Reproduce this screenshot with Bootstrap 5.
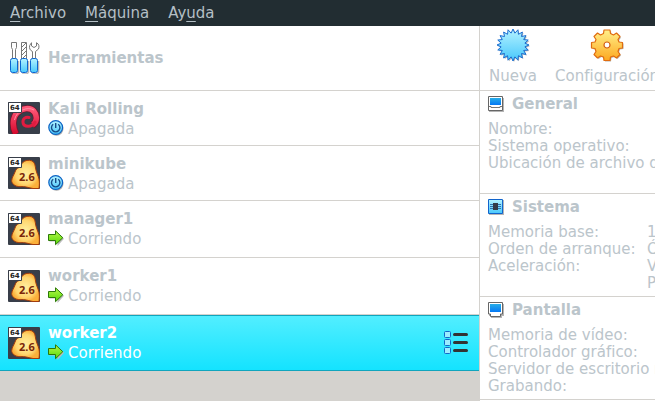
<!DOCTYPE html>
<html lang="es">
<head>
<meta charset="utf-8">
<meta name="viewport" content="width=device-width, initial-scale=1">
<title>Administrador de máquinas</title>
<link href="https://cdn.jsdelivr.net/npm/bootstrap@5.3.0/dist/css/bootstrap.min.css" rel="stylesheet">
<style>
  body { font-family: "DejaVu Sans", sans-serif; font-size: 15px; line-height: 20px; color: #bbc5cb; background: #fff; }
  button { color: inherit; }
  svg { display: block; flex: none; }
  .menubar { background: #222d32; padding: 3px 10px; gap: 19px; }
  .menubar a { color: #b4bfc5; text-decoration: none; }
  .menubar u { text-underline-offset: 3px; text-decoration-thickness: 1px; text-decoration-skip-ink: none; }
  .panes { display: grid; grid-template-columns: 480px minmax(0, 1fr); }
  .machines { background: #d4d2ce; border-right: 1px solid #d4d2ce; }
  .machine { background: #fff; border-bottom: 1px solid #d4d2ce; }
  .machine > button:first-child { padding: 7px 8px; gap: 8px; }
  .machine.roomy > button:first-child { padding-block: 8px; }
  .machine.stopped > button:first-child { padding-block: 6px; }
  .machine.stopped .title { padding-top: 2px; }
  .machine.tools > button:first-child { padding-block: 16px; }
  .machine.selected { color: #fff; background: linear-gradient(#52eeff, #14e3ff); border: solid #10a5bd; border-width: 1px 0; }
  .state { gap: 4px; }
  .state span { font-weight: 400; }
  .state svg { margin-bottom: 3px; }
  .menu-button { padding: 0 10px; }
  .toolbar { padding-top: 2px; border-bottom: 1px solid #d4d2ce; overflow: hidden; }
  .toolbar button { padding: 0 9px 4px; }
  .toolbar svg { margin-bottom: 4px; }
  .group { min-height: 103px; padding: 3px 0 4px 8px; border-bottom: 1px solid #d4d2ce; overflow: hidden; }
  .group h2 { font-size: 15px; line-height: 20px; gap: 7px; margin-bottom: 7px; }
  .group th, .group td { padding: 0; font-weight: 400; line-height: 17px; white-space: nowrap; vertical-align: top; }
  .group th { min-width: 159px; }
  .t64 { font: bold 7px "DejaVu Sans", sans-serif; fill: #222; }
  .t26 { font: bold 11px "Noto Sans", sans-serif; fill: #7b2708; }
</style>
<script src="https://cdn.jsdelivr.net/npm/bootstrap@5.3.0/dist/js/bootstrap.bundle.min.js"></script>
</head>
<body class="min-vh-100 d-flex flex-column overflow-hidden">
<svg width="0" height="0" class="position-absolute" aria-hidden="true">
  <defs>
    <linearGradient id="blue" x2="0" y2="1"><stop stop-color="#b4f2ff"/><stop offset="1" stop-color="#48c8fc"/></linearGradient>
    <linearGradient id="screen" x2="0" y2="1"><stop stop-color="#28aee8"/><stop offset="1" stop-color="#0478f5"/></linearGradient>
    <linearGradient id="gold" x2="0" y2="1"><stop stop-color="#fff08a"/><stop offset="1" stop-color="#fda820"/></linearGradient>
    <linearGradient id="green" x2="0" y2="1"><stop stop-color="#b6f84a"/><stop offset="1" stop-color="#55d808"/></linearGradient>
    <linearGradient id="red" x2="0" y2="1"><stop stop-color="#ff5878"/><stop offset="1" stop-color="#d4082c"/></linearGradient>
    <radialGradient id="amber"><stop stop-color="#fff0a0"/><stop offset=".7" stop-color="#ffd670"/><stop offset="1" stop-color="#fbb03a"/></radialGradient>
    <symbol id="linux" viewBox="0 0 32 32">
      <rect width="32" height="32" rx="1" fill="#383e49"/>
      <path d="M13.500 7C15 4.500 18 3 21.500 3.300C25 3.500 27 6 27.300 9.500C27.600 14 30 18 31 22C31.500 25 31.500 28 31 31.500H25C21 31 17 29 12 29.700C7 29.700 3.500 26.500 3.700 23.500C4 20 6 18 7 15C8 12 9 11.500 11 10.500Z" fill="url(#amber)" stroke="#a33c0c"/>
      <text x="11" y="24" class="t26">2.6</text>
      <path d="M.5.5h13v10H.5z" fill="#fff" stroke="#383e49"/><text x="2" y="8" class="t64">64</text>
    </symbol>
    <symbol id="power" viewBox="0 0 16 16">
      <circle cx="8.500" cy="8.700" r="7" fill="#aaa"/>
      <circle cx="7.700" cy="7.500" r="6.900" fill="url(#blue)" stroke="#0b62c4" stroke-width="1.200"/>
      <path d="M7.700 3v5M5.200 4.300a4.200 4.200 0 1 0 5 0" fill="none" stroke="#174b88" stroke-width="1.400"/>
    </symbol>
    <symbol id="run" viewBox="0 0 16 16">
      <path d="M1.500 5.500h7V1.500L16 8.700 9.500 16v-4.500h-8z" fill="#bbb"/>
      <path d="M.5 4.500h7V.8L14.800 7.700 7.500 14.700V10.500h-7z" fill="url(#green)" stroke="#2c7808"/>
    </symbol>
    <symbol id="monitor" viewBox="0 0 16 16">
      <path d="M1 2h15v14H1z" fill="#b5b5b5"/>
      <path d="M.5.500h14v14H.5z" fill="#fff" stroke="#666"/>
      <path d="M2 2h11v7H2z" fill="url(#screen)"/>
      <path d="M1 10.500h2v1h9v-1h2" fill="none" stroke="#777"/>
    </symbol>
  </defs>
</svg>

<nav class="menubar d-flex" aria-label="Menú principal">
  <a href="#"><u>A</u>rchivo</a>
  <a href="#"><u>M</u>áquina</a>
  <a href="#">Ay<u>u</u>da</a>
</nav>

<main class="panes flex-grow-1">
  <div class="machines">
    <ul class="list-unstyled mb-0">
      <li class="machine tools d-flex">
        <button type="button" class="border-0 bg-transparent d-flex align-items-center flex-grow-1 text-start fw-bold">
          <svg width="32" height="32" viewBox="0 0 32 32" aria-hidden="true">
            <path d="M4 32h5l1.500-2V19M14 32h5l1.500-2V19M24 32h5l1.500-2V19" fill="none" stroke="#b8b8b8" stroke-width="1.500"/>
            <path d="M3.500.500h5v5l-1 2V17h-3V7.500l-1-2zM13.500.500h5V17h-5z" fill="#fff" stroke="#777"/>
            <path d="M14 5l4-4M14 9l4-4M14 13l4-4M14 17l4-4" stroke="#777"/>
            <path d="M24.500 17V9.500C22 8.500 21 6 21.700 3.500L23.500.700V4L26 5.500 28.500 4V.7C31 2 31.500 4.500 30.500 7L27.500 9.500V17z" fill="#fff" stroke="#777"/>
            <g fill="url(#blue)" stroke="#0c64d0"><rect x="2.500" y="16.500" width="7" height="14" rx="2"/><rect x="12.500" y="16.500" width="7" height="14" rx="2"/><rect x="22.500" y="16.500" width="7" height="14" rx="2"/></g>
          </svg>
          <span>Herramientas</span>
        </button>
      </li>
      <li class="machine stopped d-flex">
        <button type="button" class="border-0 bg-transparent d-flex align-items-center flex-grow-1 text-start fw-bold">
          <svg width="32" height="32" viewBox="0 0 32 32" aria-hidden="true">
            <rect width="32" height="32" rx="1" fill="#383e49"/>
            <path d="M8 32C4 25 4.500 15 9.500 10.500C14 6 22.500 5 26 9.500C30 14 28.500 21 24.500 23" fill="none" stroke="#70142b" stroke-width="7"/>
            <path d="M8 32C4 25 4.500 15 9.500 10.500C14 6 22.500 5 26 9.500C30 14 28.500 21 24.500 23" fill="none" stroke="url(#red)" stroke-width="5.500"/>
            <path d="M27 20C24 26 15.500 25 15 20.500C14.500 16.500 18 14.500 21 15.500" fill="none" stroke="#e01c40" stroke-width="3" stroke-linecap="round"/>
            <path d="M6.500 18C8 9 19 4 26 8" fill="none" stroke="#ff90a4"/>
            <path d="M.5.500h13v10H.5z" fill="#fff" stroke="#383e49"/><text x="2" y="8" class="t64">64</text>
          </svg>
          <span class="title d-block">Kali Rolling
            <span class="state d-flex align-items-center"><svg width="16" height="16" aria-hidden="true"><use href="#power"/></svg><span>Apagada</span></span>
          </span>
        </button>
      </li>
      <li class="machine stopped d-flex">
        <button type="button" class="border-0 bg-transparent d-flex align-items-center flex-grow-1 text-start fw-bold">
          <svg width="32" height="32" aria-hidden="true"><use href="#linux"/></svg>
          <span class="title d-block">minikube
            <span class="state d-flex align-items-center"><svg width="16" height="16" aria-hidden="true"><use href="#power"/></svg><span>Apagada</span></span>
          </span>
        </button>
      </li>
      <li class="machine roomy d-flex">
        <button type="button" class="border-0 bg-transparent d-flex align-items-center flex-grow-1 text-start fw-bold">
          <svg width="32" height="32" aria-hidden="true"><use href="#linux"/></svg>
          <span class="d-block">manager1
            <span class="state d-flex align-items-center"><svg width="16" height="16" aria-hidden="true"><use href="#run"/></svg><span>Corriendo</span></span>
          </span>
        </button>
      </li>
      <li class="machine roomy d-flex">
        <button type="button" class="border-0 bg-transparent d-flex align-items-center flex-grow-1 text-start fw-bold">
          <svg width="32" height="32" aria-hidden="true"><use href="#linux"/></svg>
          <span class="d-block">worker1
            <span class="state d-flex align-items-center"><svg width="16" height="16" aria-hidden="true"><use href="#run"/></svg><span>Corriendo</span></span>
          </span>
        </button>
      </li>
      <li class="machine selected d-flex">
        <button type="button" class="border-0 bg-transparent d-flex align-items-center flex-grow-1 text-start fw-bold" aria-current="true">
          <svg width="32" height="32" aria-hidden="true"><use href="#linux"/></svg>
          <span class="d-block">worker2
            <span class="state d-flex align-items-center"><svg width="16" height="16" aria-hidden="true"><use href="#run"/></svg><span>Corriendo</span></span>
          </span>
        </button>
        <button type="button" class="menu-button border-0 bg-transparent d-flex align-items-center" aria-label="Vistas de la máquina">
          <svg width="25" height="24" viewBox="0 0 25 24" aria-hidden="true">
            <g fill="#9cecff" stroke="#1268c8"><rect x=".5" y=".5" width="6" height="6" rx="1"/><rect x=".5" y="8.500" width="6" height="6" rx="1"/><rect x=".5" y="16.500" width="6" height="6" rx="1"/></g>
            <path d="M10.500 3.500h12M10.500 11.500h12M10.500 19.500h12" stroke="#333" stroke-width="3" stroke-linecap="round"/>
          </svg>
        </button>
      </li>
    </ul>
  </div>

  <div>
    <div class="toolbar d-flex" role="toolbar" aria-label="Acciones">
      <button type="button" class="border-0 bg-transparent d-flex flex-column align-items-center">
        <svg width="34" height="34" viewBox="-17 -17 34 34" aria-hidden="true"><g id="burst"></g></svg>
        Nueva
      </button>
      <button type="button" class="border-0 bg-transparent d-flex flex-column align-items-center">
        <svg width="34" height="34" viewBox="-17 -17 34 34" aria-hidden="true">
          <g stroke-linejoin="round">
            <path d="M-3.500-11.500L-3-15H3L3.500-11.500L6.500-10L9.500-12L13-8.500L11-5.500L12-3L15.500-2.500V3L12 3.500L11 6.500L13 9.500L9.500 13L6.500 11L3.500 12L3 15.500H-3L-3.500 12L-6.500 11L-9.500 13L-13 9.500L-11 6.500L-12 3.500L-15.500 3V-2.500L-12-3L-11-5.500L-13-8.500L-9.500-12L-6.500-10Z" transform="translate(1 1)" fill="#b8b4ac"/>
            <path d="M-3.500-11.500L-3-15H3L3.500-11.500L6.500-10L9.500-12L13-8.500L11-5.500L12-3L15.500-2.500V3L12 3.500L11 6.500L13 9.500L9.500 13L6.500 11L3.500 12L3 15.500H-3L-3.500 12L-6.500 11L-9.500 13L-13 9.500L-11 6.500L-12 3.500L-15.500 3V-2.500L-12-3L-11-5.500L-13-8.500L-9.500-12L-6.500-10Z" fill="url(#gold)" stroke="#e06c10" stroke-width="1.200"/>
          </g>
          <circle r="3" fill="#fff" stroke="#d46014" stroke-width="1.200"/>
        </svg>
        Configuración
      </button>
    </div>

    <section class="group">
      <h2 class="d-flex align-items-center fw-bold"><svg width="17" height="16" viewBox="0 0 17 16" aria-hidden="true"><use href="#monitor" width="16" height="16"/></svg>General</h2>
      <table>
        <tr><th scope="row">Nombre:</th></tr>
        <tr><th scope="row">Sistema operativo:</th></tr>
        <tr><th scope="row">Ubicación de archivo d</th></tr>
      </table>
    </section>

    <section class="group">
      <h2 class="d-flex align-items-center fw-bold">
        <svg width="17" height="16" viewBox="0 0 17 16" aria-hidden="true">
          <path d="M1 1h15v15H1z" fill="#b5b5b5"/><path d="M.5.500h14v14H.5z" fill="url(#blue)" stroke="#1164cc"/>
          <path d="M2 5.500h11M2 7.500h11M2 9.500h11" stroke="#3470ac"/><path d="M5 4h5v7H5z" fill="#343a48"/>
        </svg>Sistema</h2>
      <table>
        <tr><th scope="row">Memoria base:</th><td>1</td></tr>
        <tr><th scope="row">Orden de arranque:</th><td>Ó</td></tr>
        <tr><th scope="row">Aceleración:</th><td>V<br>P</td></tr>
      </table>
    </section>

    <section class="group">
      <h2 class="d-flex align-items-center fw-bold">
        <svg width="17" height="16" viewBox="0 0 17 16" aria-hidden="true">
          <path d="M1 2h15v12h-2v2H3v-2H1z" fill="#b5b5b5"/><path d="M.5.500h14v11.500h-2v2.500h-10v-2.500h-2z" fill="#fff" stroke="#666"/><path d="M2 2h11v8H2z" fill="url(#screen)"/>
        </svg>Pantalla</h2>
      <table>
        <tr><th scope="row">Memoria de vídeo:</th></tr>
        <tr><th scope="row">Controlador gráfico:</th></tr>
        <tr><th scope="row">Servidor de escritorio r</th></tr>
        <tr><th scope="row">Grabando:</th></tr>
      </table>
    </section>
  </div>
</main>
<script>
  // Star badge: 20 points alternating between two radii.
  const points = Array.from({ length: 40 }, (_, i) => {
    const a = i * Math.PI / 20 - Math.PI / 2, r = i % 2 ? 12 : 16;
    return (r * Math.cos(a)).toFixed(2) + ',' + (r * Math.sin(a)).toFixed(2);
  }).join(' ');
  document.getElementById('burst').innerHTML =
    `<polygon points="${points}" transform="translate(1 1)" fill="#b4b4b4"/><polygon points="${points}" fill="url(#blue)" stroke="#1a6cd0"/>`;
</script>
</body>
</html>
